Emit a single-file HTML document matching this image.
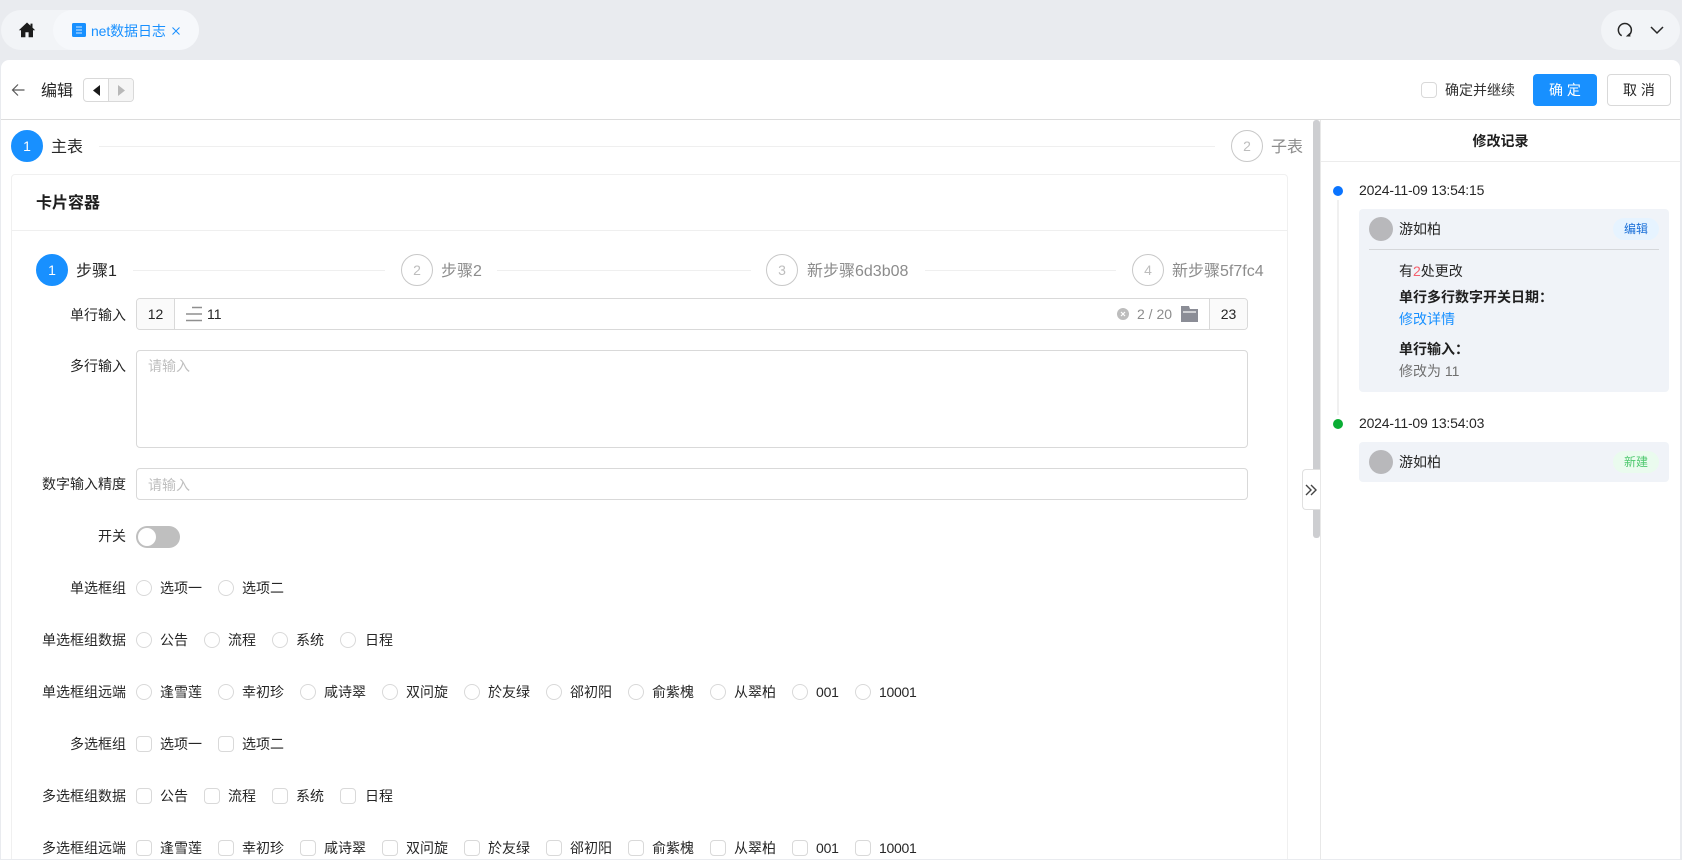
<!DOCTYPE html>
<html lang="zh"><head><meta charset="utf-8"><title>net数据日志</title>
<style>
*{box-sizing:border-box}
html,body{margin:0;padding:0;width:1682px;height:860px;overflow:hidden}
body{position:relative;background:#e9ebef;font-family:"Liberation Sans","Noto Sans CJK SC",sans-serif;font-size:14px;color:#262626}
#p{position:absolute;left:0;top:0;width:1682px;height:860px;overflow:hidden}
.a{position:absolute}
.t{position:absolute;line-height:20px;white-space:nowrap}
.l{position:absolute;left:6px;width:120px;text-align:right;line-height:20px;white-space:nowrap}
.r{position:absolute;width:16px;height:16px;border:1px solid #d9d9d9;border-radius:50%;background:#fff}
.c{position:absolute;width:16px;height:16px;border:1px solid #d9d9d9;border-radius:4px;background:#fff}
.n{position:absolute;width:32px;height:32px;border-radius:50%;text-align:center;line-height:30px;border:1px solid #c8c8c8;color:#bdbdbd;font-size:14px;background:#fff}
.n.on{background:#1890ff;border-color:#1890ff;color:#fff}
.ln{position:absolute;height:1px;background:#efefef}
.g{color:#8c8c8c;font-size:16px}
.f16{font-size:16px}
.box{position:absolute;border:1px solid #d9d9d9;border-radius:4px;background:#fff}
.ph{color:#bfbfbf}
</style></head><body><div id="p">

<!-- top bar -->
<div class="a" style="left:1px;top:10px;width:198px;height:40px;border-radius:20px;background:#f2f4f7"></div>
<div class="a" style="left:53px;top:10px;width:146px;height:40px;border-radius:20px;background:#f6f8fb"></div>
<svg class="a" style="left:18px;top:21px" width="18" height="18" viewBox="0 0 18 18"><path d="M9 1.500 .8 9.200H3v7h4.400v-5h3.200v5H15v-7h2.200L14.500 6.600V2.600h-2v2.200z" fill="#1c1c1c"/></svg>
<svg class="a" style="left:72px;top:23px" width="14" height="14" viewBox="0 0 14 14"><rect width="14" height="14" rx="1.500" fill="#1890ff"/><path d="M4 4h6M4 7h6M4 10h6" stroke="#cfe7ff" stroke-width="1"/></svg>
<div class="t" style="left:91px;top:21px;color:#1890ff;letter-spacing:-.1px">net数据日志</div>
<svg class="a" style="left:172px;top:27px" width="8" height="8" viewBox="0 0 8 8"><path d="M.5.5l7 7M7.500.5l-7 7" stroke="#1890ff" stroke-width="1"/></svg>

<div class="a" style="left:1601px;top:10px;width:79px;height:40px;border-radius:20px;background:#f2f4f7"></div>
<svg class="a" style="left:1617px;top:22px" width="16" height="16" viewBox="0 0 16 16"><path d="M4.700 13.700A6.500 6.500 0 1 1 11.800 13.200" fill="none" stroke="#262626" stroke-width="1.500"/><path d="M8.800 14.500H13.500L12.800 10.800z" fill="#262626"/></svg>
<svg class="a" style="left:1650px;top:25px" width="14" height="10" viewBox="0 0 14 10"><path d="M1 2l6 6 6-6" fill="none" stroke="#262626" stroke-width="1.500"/></svg>

<!-- main panel -->
<div class="a" style="left:1px;top:60px;width:1679px;height:799px;border-radius:8px 8px 0 0;background:#fff;overflow:hidden"></div>
<div class="a" style="left:1px;top:119px;width:1679px;height:1px;background:#dcdcdc"></div>

<svg class="a" style="left:11px;top:83px" width="14" height="14" viewBox="0 0 14 14"><path d="M7 1.500 1.500 7 7 12.500M1.500 7H13.500" fill="none" stroke="#595959" stroke-width="1.200"/></svg>
<div class="t f16" style="left:41px;top:82px">编辑</div>
<div class="a" style="left:83px;top:78px;width:51px;height:24px;border:1px solid #d9d9d9;border-radius:4px;overflow:hidden;background:#fff">
  <div class="a" style="left:24px;top:0;width:26px;height:22px;background:#f5f5f5;border-left:1px solid #d9d9d9"></div>
</div>
<svg class="a" style="left:92px;top:85px" width="9" height="11" viewBox="0 0 9 11"><path d="M8 0v11L1 5.500z" fill="#1a1a1a"/></svg>
<svg class="a" style="left:117px;top:85px" width="9" height="11" viewBox="0 0 9 11"><path d="M1 0v11l7-5.500z" fill="#b8b8b8"/></svg>

<div class="c" style="left:1421px;top:82px"></div>
<div class="t" style="left:1445px;top:80px;color:#333">确定并继续</div>
<div class="a" style="left:1533px;top:74px;width:64px;height:32px;background:#1890ff;border-radius:4px;color:#fff;text-align:center;line-height:32px">确 定</div>
<div class="a" style="left:1607px;top:74px;width:64px;height:32px;background:#fff;border:1px solid #d9d9d9;border-radius:4px;text-align:center;line-height:30px">取 消</div>

<!-- main steps -->
<div class="n on" style="left:11px;top:130px">1</div>
<div class="t f16" style="left:51px;top:138px">主表</div>
<div class="ln" style="left:99px;top:146px;width:1116px"></div>
<div class="n" style="left:1231px;top:130px">2</div>
<div class="t g" style="left:1271px;top:138px">子表</div>

<!-- card -->
<div class="a" style="left:11px;top:174px;width:1277px;height:700px;border:1px solid #f0f0f0;border-radius:4px"></div>
<div class="ln" style="left:12px;top:230px;width:1275px"></div>
<div class="t f16" style="left:36px;top:194px;font-weight:bold;color:#1f1f1f">卡片容器</div>

<!-- inner steps -->
<div class="n on" style="left:36px;top:254px">1</div>
<div class="t f16" style="left:76px;top:262px">步骤1</div>
<div class="ln" style="left:133px;top:270px;width:252px"></div>
<div class="n" style="left:401px;top:254px">2</div>
<div class="t g" style="left:441px;top:262px">步骤2</div>
<div class="ln" style="left:497px;top:270px;width:254px"></div>
<div class="n" style="left:766px;top:254px">3</div>
<div class="t g" style="left:807px;top:262px">新步骤6d3b08</div>
<div class="ln" style="left:925px;top:270px;width:191px"></div>
<div class="n" style="left:1132px;top:254px">4</div>
<div class="t g" style="left:1172px;top:262px">新步骤5f7fc4</div>

<!-- form: single-line -->
<div class="l" style="top:305px">单行输入</div>
<div class="box" style="left:136px;top:298px;width:1112px;height:32px;overflow:hidden">
  <div class="a" style="left:0;top:0;width:38px;height:30px;background:#fafafa;border-right:1px solid #d9d9d9;text-align:center;line-height:30px">12</div>
  <div class="a" style="right:0;top:0;width:38px;height:30px;background:#fafafa;border-left:1px solid #d9d9d9;text-align:center;line-height:30px">23</div>
</div>
<svg class="a" style="left:186px;top:306px" width="16" height="16" viewBox="0 0 16 16"><path d="M6 1.500h10M0 8h16M0 14.500h16" stroke="#8f8f8f" stroke-width="1.500"/></svg>
<div class="t" style="left:207px;top:304px">11</div>
<svg class="a" style="left:1117px;top:308px" width="12" height="12" viewBox="0 0 12 12"><circle cx="6" cy="6" r="6" fill="#bdbdbd"/><path d="M4 4l4 4M8 4l-4 4" stroke="#fff" stroke-width="1.200"/></svg>
<div class="t" style="left:1137px;top:304px;color:#8c8c8c">2 / 20</div>
<svg class="a" style="left:1181px;top:306px" width="17" height="16" viewBox="0 0 17 16"><path d="M0 0H8L9 3H17V16H0z" fill="#8b8d96"/><path d="M2 6h13" stroke="#fff" stroke-width="1.200"/></svg>

<!-- textarea -->
<div class="l" style="top:356px">多行输入</div>
<div class="box" style="left:136px;top:350px;width:1112px;height:98px"></div>
<div class="t ph" style="left:148px;top:356px">请输入</div>

<!-- number -->
<div class="l" style="top:474px">数字输入精度</div>
<div class="box" style="left:136px;top:468px;width:1112px;height:32px"></div>
<div class="t ph" style="left:148px;top:475px">请输入</div>

<!-- switch -->
<div class="l" style="top:526px">开关</div>
<div class="a" style="left:136px;top:526px;width:44px;height:22px;border-radius:11px;background:#bfbfbf"></div>
<div class="a" style="left:138px;top:528px;width:18px;height:18px;border-radius:50%;background:#fff"></div>

<!-- radio group -->
<div class="l" style="top:578px">单选框组</div>
<div class="r" style="left:136px;top:580px"></div><div class="t" style="left:160px;top:578px">选项一</div>
<div class="r" style="left:218px;top:580px"></div><div class="t" style="left:242px;top:578px">选项二</div>

<div class="l" style="top:630px">单选框组数据</div>
<div class="r" style="left:136px;top:632px"></div><div class="t" style="left:160px;top:630px">公告</div>
<div class="r" style="left:204px;top:632px"></div><div class="t" style="left:228px;top:630px">流程</div>
<div class="r" style="left:272px;top:632px"></div><div class="t" style="left:296px;top:630px">系统</div>
<div class="r" style="left:340px;top:632px"></div><div class="t" style="left:365px;top:630px">日程</div>

<div class="l" style="top:682px">单选框组远端</div>
<div class="r" style="left:136px;top:684px"></div><div class="t" style="left:160px;top:682px">逢雪莲</div>
<div class="r" style="left:218px;top:684px"></div><div class="t" style="left:242px;top:682px">幸初珍</div>
<div class="r" style="left:300px;top:684px"></div><div class="t" style="left:324px;top:682px">咸诗翠</div>
<div class="r" style="left:382px;top:684px"></div><div class="t" style="left:406px;top:682px">双问旋</div>
<div class="r" style="left:464px;top:684px"></div><div class="t" style="left:488px;top:682px">於友绿</div>
<div class="r" style="left:546px;top:684px"></div><div class="t" style="left:570px;top:682px">郤初阳</div>
<div class="r" style="left:628px;top:684px"></div><div class="t" style="left:652px;top:682px">俞紫槐</div>
<div class="r" style="left:710px;top:684px"></div><div class="t" style="left:734px;top:682px">从翠柏</div>
<div class="r" style="left:792px;top:684px"></div><div class="t" style="left:816px;top:682px;letter-spacing:-.2px">001</div>
<div class="r" style="left:855px;top:684px"></div><div class="t" style="left:879px;top:682px;letter-spacing:-.3px">10001</div>

<!-- checkbox groups -->
<div class="l" style="top:734px">多选框组</div>
<div class="c" style="left:136px;top:736px"></div><div class="t" style="left:160px;top:734px">选项一</div>
<div class="c" style="left:218px;top:736px"></div><div class="t" style="left:242px;top:734px">选项二</div>

<div class="l" style="top:786px">多选框组数据</div>
<div class="c" style="left:136px;top:788px"></div><div class="t" style="left:160px;top:786px">公告</div>
<div class="c" style="left:204px;top:788px"></div><div class="t" style="left:228px;top:786px">流程</div>
<div class="c" style="left:272px;top:788px"></div><div class="t" style="left:296px;top:786px">系统</div>
<div class="c" style="left:340px;top:788px"></div><div class="t" style="left:365px;top:786px">日程</div>

<div class="l" style="top:838px">多选框组远端</div>
<div class="c" style="left:136px;top:840px"></div><div class="t" style="left:160px;top:838px">逢雪莲</div>
<div class="c" style="left:218px;top:840px"></div><div class="t" style="left:242px;top:838px">幸初珍</div>
<div class="c" style="left:300px;top:840px"></div><div class="t" style="left:324px;top:838px">咸诗翠</div>
<div class="c" style="left:382px;top:840px"></div><div class="t" style="left:406px;top:838px">双问旋</div>
<div class="c" style="left:464px;top:840px"></div><div class="t" style="left:488px;top:838px">於友绿</div>
<div class="c" style="left:546px;top:840px"></div><div class="t" style="left:570px;top:838px">郤初阳</div>
<div class="c" style="left:628px;top:840px"></div><div class="t" style="left:652px;top:838px">俞紫槐</div>
<div class="c" style="left:710px;top:840px"></div><div class="t" style="left:734px;top:838px">从翠柏</div>
<div class="c" style="left:792px;top:840px"></div><div class="t" style="left:816px;top:838px;letter-spacing:-.2px">001</div>
<div class="c" style="left:855px;top:840px"></div><div class="t" style="left:879px;top:838px;letter-spacing:-.3px">10001</div>

<!-- bottom edge -->
<div class="a" style="left:0;top:859px;width:1682px;height:1px;background:#e9ebef"></div>

<!-- scrollbar -->
<div class="a" style="left:1313px;top:120px;width:7px;height:418px;background:#cdced1;border-radius:3px"></div>
<div class="a" style="left:1320px;top:120px;width:1px;height:739px;background:#e8e8e8"></div>

<!-- collapse handle -->
<div class="a" style="left:1302px;top:469px;width:18px;height:41px;background:#fff;border:1px solid #e0e0e0;border-right:0;border-radius:4px 0 0 4px"></div>
<svg class="a" style="left:1305px;top:484px" width="12" height="12" viewBox="0 0 12 12"><path d="M1 1l5 5-5 5M6 1l5 5-5 5" fill="none" stroke="#444" stroke-width="1.400"/></svg>

<!-- history panel -->
<div class="t" style="left:1321px;top:131px;width:359px;text-align:center;color:#1f1f1f;font-weight:bold;font-size:14px">修改记录</div>
<div class="a" style="left:1321px;top:161px;width:359px;height:1px;background:#ececec"></div>

<div class="a" style="left:1333px;top:186px;width:10px;height:10px;border-radius:50%;background:#0a74ff"></div>
<div class="a" style="left:1337px;top:200px;width:2px;height:215px;background:#f0f0f0"></div>
<div class="a" style="left:1333px;top:419px;width:10px;height:10px;border-radius:50%;background:#0aad34"></div>

<div class="t" style="left:1359px;top:180px;letter-spacing:-.2px">2024-11-09 13:54:15</div>
<div class="a" style="left:1359px;top:209px;width:310px;height:183px;background:#f0f3f8;border-radius:4px"></div>
<div class="a" style="left:1369px;top:217px;width:24px;height:24px;border-radius:50%;background:#b8b8bb"></div>
<div class="t" style="left:1399px;top:219px;font-size:14px">游如柏</div>
<div class="a" style="left:1613px;top:218px;width:46px;height:22px;border-radius:11px;background:#e6f3ff;color:#1a6fd8;text-align:center;line-height:22px;font-size:12px">编辑</div>
<div class="a" style="left:1369px;top:249px;width:290px;height:1px;background:#d5d7da"></div>
<div class="t" style="left:1399px;top:261px">有<span style="color:#f5606d">2</span>处更改</div>
<div class="t" style="left:1399px;top:287px;font-weight:bold;color:#1f1f1f">单行多行数字开关日期：</div>
<div class="t" style="left:1399px;top:309px;color:#1890ff">修改详情</div>
<div class="t" style="left:1399px;top:339px;font-weight:bold;color:#1f1f1f">单行输入：</div>
<div class="t" style="left:1399px;top:361px;color:#6f6f6f">修改为 11</div>

<div class="t" style="left:1359px;top:413px;letter-spacing:-.2px">2024-11-09 13:54:03</div>
<div class="a" style="left:1359px;top:442px;width:310px;height:40px;background:#f0f3f8;border-radius:4px"></div>
<div class="a" style="left:1369px;top:450px;width:24px;height:24px;border-radius:50%;background:#b8b8bb"></div>
<div class="t" style="left:1399px;top:452px">游如柏</div>
<div class="a" style="left:1613px;top:451px;width:46px;height:22px;border-radius:11px;background:#eafbee;color:#4fc96f;text-align:center;line-height:22px;font-size:12px">新建</div>

</div></body></html>
